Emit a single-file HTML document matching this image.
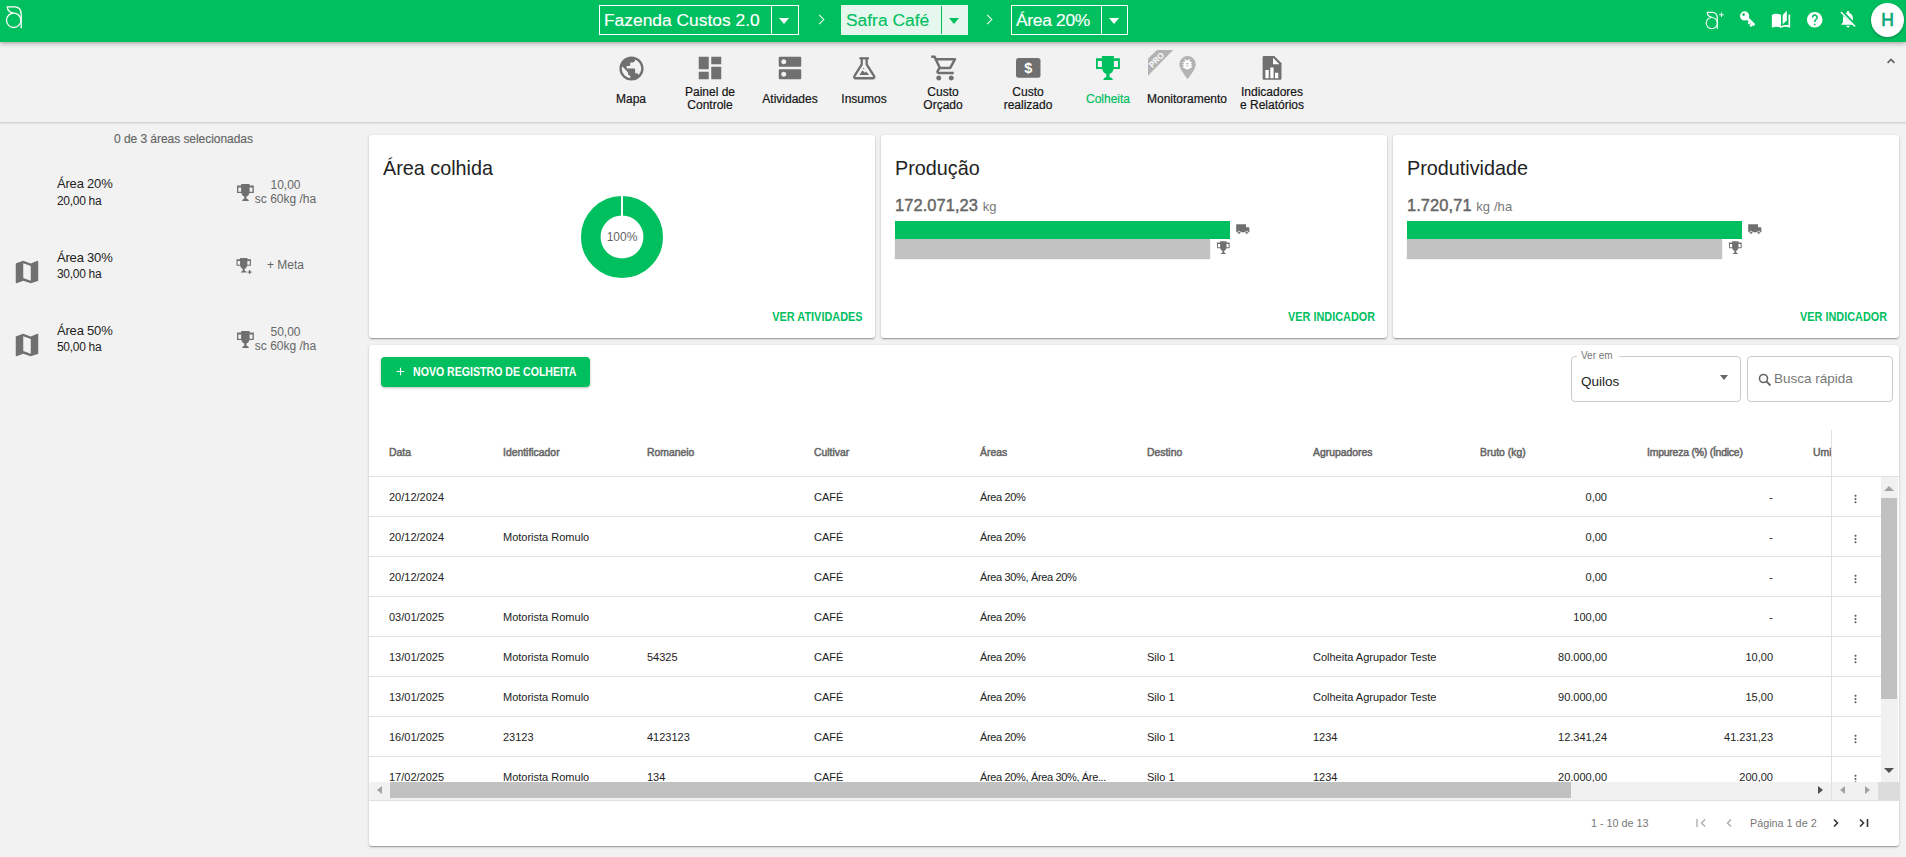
<!DOCTYPE html>
<html><head><meta charset="utf-8">
<style>
*{box-sizing:border-box;margin:0;padding:0}
html,body{width:1906px;height:857px;overflow:hidden}
body{background:#f2f2f2;font-family:"Liberation Sans",sans-serif;position:relative;color:#222}
.a{position:absolute}
.t{position:absolute;white-space:nowrap;line-height:1}
#hdr{left:0;top:0;width:1906px;height:42px;background:#00bf5f;box-shadow:0 1px 5px rgba(0,0,0,.38);z-index:5}
.bc{position:absolute;top:5px;height:30px;border:1px solid #fff;}
.bc .lbl{position:absolute;left:4px;top:5px;font-size:17.4px;color:#fff;-webkit-text-stroke:0.15px currentColor;white-space:nowrap;line-height:18px}
.bc .dv{position:absolute;top:0;width:1px;height:28px;background:#fff}
.bc .ar{position:absolute;top:12px;width:0;height:0;border-left:5.5px solid transparent;border-right:5.5px solid transparent;border-top:6px solid #fff}
.chev{position:absolute;top:16px;width:7px;height:7px;border-right:1.6px solid #fff;border-top:1.6px solid #fff;transform:rotate(45deg)}
#nav{left:0;top:42px;width:1906px;height:81px;border-bottom:1px solid #d4d4d4;box-shadow:0 1px 1px rgba(0,0,0,.06)}
.ni{position:absolute;top:0;text-align:center;font-size:12px;color:#151515;-webkit-text-stroke:0.2px #151515;line-height:12.5px;white-space:nowrap}
.ico{position:absolute}
.card{position:absolute;background:#fff;border-radius:3px;box-shadow:0 1px 3px rgba(0,0,0,.2),0 1px 1px rgba(0,0,0,.14),0 2px 1px -1px rgba(0,0,0,.12)}
</style></head><body>

<div id="hdr" class="a">
  <!-- logo -->
  <svg class="a" style="left:0;top:0" width="30" height="40" viewBox="0 0 30 40">
    <g fill="none" stroke="#fff" stroke-width="1.3">
      <circle cx="13.7" cy="20.3" r="7.2"/>
      <path d="M21.2 28.2V14.5C21.2 9.5 18.5 6.9 14.5 6.9H7.3C7.3 10.5 10.5 12.8 13.7 13.1"/>
    </g>
  </svg>

  <div class="bc" style="left:599px;width:200px">
    <div class="lbl">Fazenda Custos 2.0</div>
    <div class="dv" style="left:171px"></div>
    <div class="ar" style="left:179px"></div>
  </div>
  <div class="chev" style="left:816px"></div>
  <div class="bc" style="left:841px;width:127px;background:#e6f8ee;border-color:#e6f8ee">
    <div class="lbl" style="color:#00bf5f">Safra Café</div>
    <div class="dv" style="left:99px;background:#00bf5f"></div>
    <div class="ar" style="left:107px;border-top-color:#00bf5f"></div>
  </div>
  <div class="chev" style="left:984px"></div>
  <div class="bc" style="left:1011px;width:117px">
    <div class="lbl" style="letter-spacing:-0.3px">Área 20%</div>
    <div class="dv" style="left:89px"></div>
    <div class="ar" style="left:97px"></div>
  </div>

  <!-- right icons -->
  <svg class="a" style="left:1704px;top:10px" width="22" height="22" viewBox="0 0 22 22">
    <g fill="none" stroke="#fff" stroke-width="1.1">
      <circle cx="7.8" cy="13.1" r="5.6"/>
      <path d="M13.3 18.8V8.2C13.3 4.5 11.5 2.4 8.5 2.4H3.2C3.4 5 5.5 7 8 7.4"/>
      <path d="M17.5 2.5v4.5M15.2 4.75h4.6"/>
    </g>
  </svg>
  <svg class="a" style="left:1739px;top:10px" width="18" height="18" viewBox="0 0 18 18">
    <path fill="#fff" fill-rule="evenodd" d="M5.6 1.3a4.6 4.6 0 1 1 0 9.2a4.6 4.6 0 1 1 0-9.2zM4.6 3.3a1.3 1.3 0 1 0 0 2.6a1.3 1.3 0 1 0 0-2.6z"/>
    <g transform="translate(6.8 6.8) rotate(45)"><path fill="#fff" d="M0 -1.4h12v2.8h-1.2v2.2h-2.2v-2.2h-1v1.8h-2v-1.8H0z"/></g>
  </svg>
  <svg class="a" style="left:1771px;top:10px" width="20" height="20" viewBox="0 0 24 24">
    <path fill="#fff" d="M19 1l-5 5v11l5-4.5V1zM1 6v14.65c0 .25.25.5.5.5.1 0 .15-.05.25-.05C3.1 20.45 5.05 20 6.5 20c1.95 0 4.05.4 5.5 1.5V6c-1.45-1.1-3.55-1.5-5.5-1.5S2.45 4.9 1 6zm22 13.5V6c-.6-.45-1.25-.75-2-1v13.5c-1.1-.35-2.3-.5-3.5-.5-1.7 0-4.150.65-5.5 1.5v2c1.35-.85 3.8-1.5 5.5-1.5 1.65 0 3.35.3 4.75 1.05.1.05.15.05.25.05.25 0 .5-.25.5-.5v-1.1z"/>
  </svg>
  <svg class="a" style="left:1807px;top:12px" width="15.5" height="15.5" viewBox="2 2 20 20">
    <path fill="#fff" d="M12 2C6.48 2 2 6.48 2 12s4.48 10 10 10 10-4.48 10-10S17.52 2 12 2zm1 17h-2v-2h2v2zm2.07-7.75l-.9.92C13.45 12.9 13 13.5 13 15h-2v-.5c0-1.1.45-2.1 1.17-2.83l1.24-1.26c.37-.36.59-.86.59-1.410 0-1.1-.9-2-2-2s-2 .9-2 2H8c0-2.21 1.79-4 4-4s4 1.79 4 4c0 .88-.36 1.68-.93 2.25z"/>
  </svg>
  <svg class="a" style="left:1838px;top:9px" width="20" height="20" viewBox="0 0 24 24">
    <path fill="#fff" d="M18 11c0-3.08-1.64-5.64-4.5-6.32V4c0-.83-.67-1.5-1.5-1.5s-1.5.67-1.5 1.5v.68c-.47.11-.91.28-1.32.49L18 13.99V11zM12 22c1.1 0 2-.9 2-2h-4c0 1.1.9 2 2 2zM6.2 8.5C6.07 9.3 6 10.14 6 11v5l-2 2v1h14.9L6.2 8.5z"/>
    <path stroke="#fff" stroke-width="1.8" d="M3.5 3.5l17 17.5"/>
  </svg>
  <div class="a" style="left:1871px;top:3px;width:33px;height:34px;border-radius:50%;background:#fff;box-shadow:0 1px 3px rgba(0,0,0,.3)"></div>
  <div class="t" style="left:1879.5px;top:12px;width:16px;text-align:center;font-size:17.5px;color:#00a878;-webkit-text-stroke:0.6px #00a878">H</div>
</div>

<div id="nav" class="a">
  <!-- chevron up -->
  <svg class="a" style="left:1886px;top:15px" width="10" height="8" viewBox="0 0 10 8"><path d="M1.6 5.8L5 2.4l3.4 3.4" fill="none" stroke="#666" stroke-width="1.7"/></svg>

  <!-- Mapa -->
  <svg class="ico" style="left:616.5px;top:11.5px" width="29" height="29" viewBox="0 0 24 24"><path fill="#707070" d="M12 2C6.48 2 2 6.48 2 12s4.48 10 10 10 10-4.48 10-10S17.52 2 12 2zm-1 17.93c-3.95-.49-7-3.85-7-7.930 0-.62.08-1.21.21-1.79L9 15v1c0 1.1.9 2 2 2v1.93zm6.9-2.54c-.26-.81-1-1.39-1.9-1.39h-1v-3c0-.55-.45-1-1-1H8v-2h2c.55 0 1-.45 1-1V7h2c1.1 0 2-.9 2-2v-.41c2.93 1.19 5 4.06 5 7.41 0 2.08-.8 3.97-2.1 5.39z"/></svg>
  <div class="ni" style="left:591px;width:80px;top:51.3px">Mapa</div>

  <!-- Painel -->
  <svg class="ico" style="left:695px;top:11px" width="30" height="30" viewBox="0 0 24 24"><path fill="#707070" d="M3 13h8V3H3v10zm0 8h8v-6H3v6zm10 0h8V11h-8v10zm0-18v6h8V3h-8z"/></svg>
  <div class="ni" style="left:670px;width:80px;top:44px">Painel de<br>Controle</div>

  <!-- Atividades -->
  <svg class="ico" style="left:775px;top:11px" width="30" height="30" viewBox="0 0 24 24"><path fill="#707070" d="M20 13H4c-.55 0-1 .45-1 1v6c0 .55.45 1 1 1h16c.55 0 1-.45 1-1v-6c0-.55-.45-1-1-1zM7 19c-1.1 0-2-.9-2-2s.9-2 2-2 2 .9 2 2-.9 2-2 2zM20 3H4c-.55 0-1 .45-1 1v6c0 .55.45 1 1 1h16c.55 0 1-.45 1-1V4c0-.55-.45-1-1-1zM7 9c-1.1 0-2-.9-2-2s.9-2 2-2 2 .9 2 2-.9 2-2 2z"/></svg>
  <div class="ni" style="left:750px;width:80px;top:51.3px">Atividades</div>

  <!-- Insumos -->
  <svg class="ico" style="left:849px;top:11px" width="30" height="30" viewBox="0 0 30 30">
    <g fill="none" stroke="#707070" stroke-width="2.3" stroke-linejoin="round" stroke-linecap="round">
      <path d="M11.3 5.3h7.7"/>
      <path d="M12.75 5.3V11.3L5.4 23.2C4.8 24.300 5.4 25.25 6.6 25.25H23.9C25.1 25.25 25.7 24.3 25.1 23.2L17.65 11.3V5.3"/>
    </g>
    <path fill="#707070" d="M10.4 22L13.5 17.3l2.3 2.4 1.2-1.1 3.1 3.4z"/>
    <circle cx="14.7" cy="15.4" r=".6" fill="#707070"/>
  </svg>
  <div class="ni" style="left:824px;width:80px;top:51.3px">Insumos</div>

  <!-- Custo Orcado -->
  <svg class="ico" style="left:929.5px;top:11px" width="30" height="30" viewBox="0 0 24 24"><path fill="#707070" d="M15.55 13c.75 0 1.41-.41 1.75-1.03l3.58-6.49c.37-.66-.11-1.48-.87-1.48H5.21l-.94-2H1v2h2l3.6 7.59-1.35 2.44C4.52 15.37 5.48 17 7 17h12v-2H7l1.1-2h7.45zM6.16 6h12.150l-2.76 5H8.53L6.16 6zM7 18c-1.1 0-1.99.9-1.99 2S5.9 22 7 22s2-.9 2-2-.9-2-2-2zm10 0c-1.1 0-1.99.9-1.99 2s.89 2 1.990 2 2-.9 2-2-.9-2-2-2z"/></svg>
  <div class="ni" style="left:903px;width:80px;top:44px">Custo<br>Orçado</div>

  <!-- Custo realizado -->
  <svg class="ico" style="left:1016px;top:16px" width="25" height="20" viewBox="0 0 25 20">
    <rect x="0" y="0" width="24.5" height="19.8" rx="2.5" fill="#707070"/>
    <text x="12.3" y="14.6" text-anchor="middle" font-family="Liberation Sans" font-weight="bold" font-size="14.5" fill="#fff">$</text>
  </svg>
  <div class="ni" style="left:988px;width:80px;top:44px">Custo<br>realizado</div>

  <!-- Colheita -->
  <svg class="ico" style="left:1095px;top:13px" width="26" height="26" viewBox="0 0 26 26">
    <path fill="#00bf5f" fill-rule="evenodd" d="M6.9 1H18.9V3.2H24.9V13.9H18.6C18 16.6 16.6 18.3 14.5 18.9V22C16.3 22.3 17.6 23.6 18 25H8.2C8.6 23.6 9.8 22.3 11.3 22V18.9C9.2 18.3 7.8 16.6 7.2 13.9H1V3.2H6.9ZM2.8 6V12H6.9V6ZM18.9 6V12H23V6Z"/>
  </svg>
  <div class="ni" style="left:1068px;width:80px;top:51.3px;color:#00bf5f;-webkit-text-stroke:0.2px #00bf5f">Colheita</div>

  <!-- Monitoramento -->
  <svg class="ico" style="left:1147px;top:7px" width="28" height="28" viewBox="0 0 28 28">
    <path fill="#b3b3b3" d="M10 1H26.2L1 26.8V9.6z"/>
    <text transform="translate(9.4 10.9) rotate(-45)" x="0" y="2.9" text-anchor="middle" font-family="Liberation Sans" font-weight="bold" font-size="8.2" fill="#fff">PRO</text>
  </svg>
  <svg class="ico" style="left:1178px;top:13px" width="19" height="26" viewBox="0 0 19 26">
    <path fill="#b3b3b3" d="M9.6 24.1C7 20.5 1.4 13.8 1.4 9.2A8.2 8.2 0 0 1 17.8 9.2C17.8 13.8 12.2 20.5 9.6 24.1z"/>
    <g transform="translate(2.38 2.26) scale(.58)"><path fill="#fff" d="M20 8h-2.81c-.45-.78-1.07-1.45-1.820-1.96L17 4.41 15.59 3l-2.17 2.17C12.96 5.06 12.49 5 12 5c-.49 0-.96.06-1.41.17L8.41 3 7 4.410l1.62 1.63C7.88 6.55 7.26 7.22 6.81 8H4v2h2.09c-.05.33-.09.66-.09 1v1H4v2h2v1c0 .34.04.67.09 1H4v2h2.81c1.04 1.79 2.97 3 5.19 3s4.15-1.21 5.19-3H20v-2h-2.09c.05-.33.09-.66.09-1v-1h2v-2h-2v-1c0-.34-.04-.67-.09-1H20V8zm-6 8h-4v-2h4v2zm0-4h-4v-2h4v2z"/></g>
  </svg>
  <div class="ni" style="left:1147px;width:80px;top:51.3px;text-align:left;overflow:hidden">Monitoramento</div>

  <!-- Indicadores -->
  <svg class="ico" style="left:1261px;top:13px" width="22" height="26" viewBox="0 0 22 26">
    <path fill="#707070" d="M3 1.1h10.4l7.1 7.1v15c0 .9-.7 1.6-1.6 1.6H3.2c-.9 0-1.6-.7-1.6-1.6V2.7C1.6 1.8 2.1 1.1 3 1.1z"/>
    <path fill="#fff" d="M12 2.8v6.5h6.4zM4.4 15h3.3v8.2H4.4zM9.3 12.6h3.3v10.6H9.3zM14 17.7h3.3v5.5H14z"/>
  </svg>
  <div class="ni" style="left:1232px;width:80px;top:44px">Indicadores<br>e Relatórios</div>
</div>



<!-- LEFT PANEL -->
<div class="t" style="left:114px;top:133px;font-size:12px;color:#666;letter-spacing:-0.05px;-webkit-text-stroke:0.15px #666">0 de 3 áreas selecionadas</div>

<div class="t" style="left:57px;top:177px;font-size:13px;letter-spacing:-0.2px;color:#222">Área 20%</div>
<div class="t" style="left:57px;top:194.6px;font-size:12px;letter-spacing:-0.3px;color:#222">20,00 ha</div>
<svg class="a" style="left:237px;top:184px" width="20" height="20" viewBox="0 0 20 20"><path transform="translate(-0.70 -0.70) scale(0.703)" fill="#707070" fill-rule="evenodd" d="M6.9 1H18.9V3.2H24.9V13.9H18.6C18 16.6 16.6 18.3 14.5 18.9V22C16.3 22.3 17.6 23.6 18 25H8.2C8.6 23.6 9.8 22.3 11.3 22V18.9C9.2 18.3 7.8 16.6 7.2 13.9H1V3.2H6.9ZM2.8 6V12H6.9V6ZM18.9 6V12H23V6Z"/></svg>
<div class="t" style="left:245px;width:81px;text-align:center;top:177.5px;font-size:12px;color:#666;line-height:14px">10,00<br>sc 60kg /ha</div>

<svg class="a" style="left:12px;top:257px" width="30" height="30" viewBox="0 0 24 24"><path fill="#707070" d="M20.5 3l-.16.03L15 5.1 9 3 3.36 4.9c-.21.07-.36.25-.36.48V20.5c0 .28.22.5.5.5l.16-.03L9 18.9l6 2.1 5.64-1.9c.21-.07.36-.25.36-.48V3.5c0-.28-.22-.5-.5-.5zM15 19l-6-2.11V5l6 2.11V19z"/></svg>
<div class="t" style="left:57px;top:251px;font-size:13px;letter-spacing:-0.2px;color:#222">Área 30%</div>
<div class="t" style="left:57px;top:267.6px;font-size:12px;letter-spacing:-0.3px;color:#222">30,00 ha</div>
<svg class="a" style="left:236px;top:258px" width="20" height="20" viewBox="0 0 20 20"><path transform="translate(-0.10 -0.60) scale(0.605)" fill="#707070" fill-rule="evenodd" d="M6.9 1H18.9V3.2H24.9V13.9H18.6C18 16.6 16.6 18.3 14.5 18.9V22C16.3 22.3 17.6 23.6 18 25H8.2C8.6 23.6 9.8 22.3 11.3 22V18.9C9.2 18.3 7.8 16.6 7.2 13.9H1V3.2H6.9ZM2.8 6V12H6.9V6ZM18.9 6V12H23V6Z"/><path stroke="#707070" stroke-width="1.2" d="M11.6 14.1h4M13.6 12.1v4"/></svg>
<div class="t" style="left:267px;top:259px;font-size:12px;color:#666">+ Meta</div>

<svg class="a" style="left:12px;top:330px" width="30" height="30" viewBox="0 0 24 24"><path fill="#707070" d="M20.5 3l-.16.03L15 5.1 9 3 3.36 4.9c-.21.07-.36.25-.36.48V20.5c0 .28.22.5.5.5l.16-.03L9 18.9l6 2.1 5.64-1.9c.21-.07.36-.25.36-.48V3.5c0-.28-.22-.5-.5-.5zM15 19l-6-2.11V5l6 2.11V19z"/></svg>
<div class="t" style="left:57px;top:323.8px;font-size:13px;letter-spacing:-0.2px;color:#222">Área 50%</div>
<div class="t" style="left:57px;top:340.8px;font-size:12px;letter-spacing:-0.3px;color:#222">50,00 ha</div>
<svg class="a" style="left:237px;top:331px" width="20" height="20" viewBox="0 0 20 20"><path transform="translate(-0.70 -0.70) scale(0.703)" fill="#707070" fill-rule="evenodd" d="M6.9 1H18.9V3.2H24.9V13.9H18.6C18 16.6 16.6 18.3 14.5 18.9V22C16.3 22.3 17.6 23.6 18 25H8.2C8.6 23.6 9.8 22.3 11.3 22V18.9C9.2 18.3 7.8 16.6 7.2 13.9H1V3.2H6.9ZM2.8 6V12H6.9V6ZM18.9 6V12H23V6Z"/></svg>
<div class="t" style="left:245px;width:81px;text-align:center;top:325px;font-size:12px;color:#666;line-height:14px">50,00<br>sc 60kg /ha</div>

<!-- CARDS -->
<div class="card" style="left:369px;top:135px;width:506px;height:203px">
  <div class="t" style="left:14px;top:24px;font-size:19.8px;color:#222">Área colhida</div>
  <svg class="a" style="left:211px;top:60px" width="84" height="84" viewBox="0 0 84 84">
    <circle cx="42" cy="42" r="31.2" fill="none" stroke="#00bf5f" stroke-width="19.6"/>
    <rect x="41" y="0" width="2" height="22" fill="#fff"/>
  </svg>
  <div class="t" style="left:223px;top:96px;width:60px;text-align:center;font-size:12px;color:#666">100%</div>
  <div class="t" style="right:12px;top:176px;font-size:12.4px;font-weight:bold;color:#00bf5f;transform:scaleX(0.88);transform-origin:100% 0">VER ATIVIDADES</div>
</div>

<div class="card" style="left:881px;top:135px;width:506px;height:203px">
  <div class="t" style="left:14px;top:24px;font-size:19.8px;color:#222">Produção</div>
  <div class="t" style="left:14px;top:62.3px;font-size:16.4px;font-weight:normal;color:#666;-webkit-text-stroke:0.45px #666;letter-spacing:0.1px">172.071,23 <span style="font-size:13px;font-weight:normal;color:#777;-webkit-text-stroke:0">kg</span></div>
  <div class="a" style="left:14px;top:86px;width:335px;height:18px;background:#00bf5f"></div>
  <div class="a" style="left:14px;top:104px;width:315px;height:19px;background:#c2c2c2;box-shadow:0 1px 1px rgba(0,0,0,.25)"></div>
  <svg class="a" style="left:355px;top:88px" width="15" height="11" viewBox="0 0 15 11"><path fill="#707070" d="M.2 1.2h9.8v8.1H.2zM10 4.2h2.2c.7 0 1.2.5 1.2 1.200V9.3H10z"/><circle cx="3.1" cy="9.7" r="1.5" fill="#707070" stroke="#fff" stroke-width=".7"/><circle cx="10.8" cy="9.7" r="1.5" fill="#707070" stroke="#fff" stroke-width=".7"/></svg>
  <svg class="a" style="left:335px;top:105px" width="20" height="20" viewBox="0 0 20 20"><path transform="translate(0.47 0.77) scale(0.53)" fill="#707070" fill-rule="evenodd" d="M6.9 1H18.9V3.2H24.9V13.9H18.6C18 16.6 16.6 18.3 14.5 18.9V22C16.3 22.3 17.6 23.6 18 25H8.2C8.6 23.6 9.8 22.3 11.3 22V18.9C9.2 18.3 7.8 16.6 7.2 13.9H1V3.2H6.9ZM2.8 6V12H6.9V6ZM18.9 6V12H23V6Z"/></svg>
  <div class="t" style="right:12px;top:176px;font-size:12.4px;font-weight:bold;color:#00bf5f;transform:scaleX(0.878);transform-origin:100% 0">VER INDICADOR</div>
</div>

<div class="card" style="left:1393px;top:135px;width:506px;height:203px">
  <div class="t" style="left:14px;top:24px;font-size:19.8px;color:#222">Produtividade</div>
  <div class="t" style="left:14px;top:62.3px;font-size:16.4px;font-weight:normal;color:#666;-webkit-text-stroke:0.45px #666;letter-spacing:0.1px">1.720,71 <span style="font-size:13px;font-weight:normal;color:#777;-webkit-text-stroke:0">kg /ha</span></div>
  <div class="a" style="left:14px;top:86px;width:335px;height:18px;background:#00bf5f"></div>
  <div class="a" style="left:14px;top:104px;width:315px;height:19px;background:#c2c2c2;box-shadow:0 1px 1px rgba(0,0,0,.25)"></div>
  <svg class="a" style="left:355px;top:88px" width="15" height="11" viewBox="0 0 15 11"><path fill="#707070" d="M.2 1.2h9.8v8.1H.2zM10 4.2h2.2c.7 0 1.2.5 1.2 1.200V9.3H10z"/><circle cx="3.1" cy="9.7" r="1.5" fill="#707070" stroke="#fff" stroke-width=".7"/><circle cx="10.8" cy="9.7" r="1.5" fill="#707070" stroke="#fff" stroke-width=".7"/></svg>
  <svg class="a" style="left:336px;top:105px" width="20" height="20" viewBox="0 0 20 20"><path transform="translate(-0.53 0.77) scale(0.53)" fill="#707070" fill-rule="evenodd" d="M6.9 1H18.9V3.2H24.9V13.9H18.6C18 16.6 16.6 18.3 14.5 18.9V22C16.3 22.3 17.6 23.6 18 25H8.2C8.6 23.6 9.8 22.3 11.3 22V18.9C9.2 18.3 7.8 16.6 7.2 13.9H1V3.2H6.9ZM2.8 6V12H6.9V6ZM18.9 6V12H23V6Z"/></svg>
  <div class="t" style="right:12px;top:176px;font-size:12.4px;font-weight:bold;color:#00bf5f;transform:scaleX(0.878);transform-origin:100% 0">VER INDICADOR</div>
</div>

<!-- TABLE -->
<div class="card" style="left:369px;top:345px;width:1530px;height:501px;overflow:hidden">
<div class="a" style="left:12px;top:12px;width:209px;height:30px;background:#00bf5f;border-radius:4px;box-shadow:0 1px 3px rgba(0,0,0,.25)"></div>
<svg class="a" style="left:27px;top:22px" width="10" height="10" viewBox="0 0 10 10"><path d="M4.5 0.7v7.6M0.7 4.5h7.6" stroke="#fff" stroke-width="1.1"/></svg>
<div class="t" style="left:44px;top:21px;font-size:12.3px;font-weight:bold;color:#fff;transform:scaleX(0.861);transform-origin:0 0">NOVO REGISTRO DE COLHEITA</div>
<div class="a" style="left:1202px;top:11px;width:170px;height:46px;border:1px solid #ccc;border-radius:4px"></div>
<div class="a" style="left:1208px;top:5px;width:42px;height:10px;background:#fff"></div>
<div class="t" style="left:1212px;top:5.5px;font-size:10px;color:#777">Ver em</div>
<div class="t" style="left:1212px;top:30px;font-size:13.5px;color:#222">Quilos</div>
<div class="a" style="left:1350.7px;top:30px;width:0;height:0;border-left:4.5px solid transparent;border-right:4.5px solid transparent;border-top:5px solid #666"></div>
<div class="a" style="left:1378px;top:11px;width:146px;height:46px;border:1px solid #ccc;border-radius:4px"></div>
<svg class="a" style="left:1389px;top:28px" width="14" height="14" viewBox="0 0 14 14"><circle cx="5.5" cy="5.5" r="4" fill="none" stroke="#666" stroke-width="1.6"/><path d="M8.5 8.5l4 4" stroke="#666" stroke-width="1.8"/></svg>
<div class="t" style="left:1405px;top:27px;font-size:13.5px;color:#777">Busca rápida</div>
<div class="a" style="left:0;top:85px;width:1462px;height:370px;overflow:hidden">
<div class="t" style="left:20px;top:18px;font-size:10.4px;font-weight:normal;color:#666;-webkit-text-stroke:0.5px #666">Data</div>
<div class="t" style="left:134px;top:18px;font-size:10.4px;font-weight:normal;color:#666;-webkit-text-stroke:0.5px #666">Identificador</div>
<div class="t" style="left:278px;top:18px;font-size:10.4px;font-weight:normal;color:#666;-webkit-text-stroke:0.5px #666">Romaneio</div>
<div class="t" style="left:445px;top:18px;font-size:10.4px;font-weight:normal;color:#666;-webkit-text-stroke:0.5px #666">Cultivar</div>
<div class="t" style="left:611px;top:18px;font-size:10.4px;font-weight:normal;color:#666;-webkit-text-stroke:0.5px #666">Áreas</div>
<div class="t" style="left:778px;top:18px;font-size:10.4px;font-weight:normal;color:#666;-webkit-text-stroke:0.5px #666">Destino</div>
<div class="t" style="left:944px;top:18px;font-size:10.4px;font-weight:normal;color:#666;-webkit-text-stroke:0.5px #666">Agrupadores</div>
<div class="t" style="left:1111px;top:18px;font-size:10.4px;font-weight:normal;color:#666;-webkit-text-stroke:0.5px #666">Bruto (kg)</div>
<div class="t" style="left:1278px;top:18px;font-size:10.4px;font-weight:normal;color:#666;-webkit-text-stroke:0.5px #666;letter-spacing:-0.2px">Impureza (%) (Índice)</div>
<div class="t" style="left:1444px;top:18px;font-size:10.4px;font-weight:normal;color:#666;-webkit-text-stroke:0.5px #666">Umidade (%) (Índice)</div>
<div class="a" style="left:0;top:46px;width:1530px;height:1px;background:#e0e0e0"></div>
<div class="t" style="left:20px;top:61.7px;font-size:11px;color:#222">20/12/2024</div>
<div class="t" style="left:445px;top:61.7px;font-size:11px;color:#222">CAFÉ</div>
<div class="t" style="left:611px;top:61.7px;font-size:11px;color:#222;letter-spacing:-0.35px">Área 20%</div>
<div class="t" style="right:224px;top:61.7px;font-size:11px;color:#222;text-align:right">0,00</div>
<div class="t" style="right:58px;top:61.7px;font-size:11px;color:#222;text-align:right">-</div>
<div class="a" style="left:0;top:86px;width:1530px;height:1px;background:#e0e0e0"></div>
<div class="t" style="left:20px;top:101.7px;font-size:11px;color:#222">20/12/2024</div>
<div class="t" style="left:134px;top:101.7px;font-size:11px;color:#222">Motorista Romulo</div>
<div class="t" style="left:445px;top:101.7px;font-size:11px;color:#222">CAFÉ</div>
<div class="t" style="left:611px;top:101.7px;font-size:11px;color:#222;letter-spacing:-0.35px">Área 20%</div>
<div class="t" style="right:224px;top:101.7px;font-size:11px;color:#222;text-align:right">0,00</div>
<div class="t" style="right:58px;top:101.7px;font-size:11px;color:#222;text-align:right">-</div>
<div class="a" style="left:0;top:126px;width:1530px;height:1px;background:#e0e0e0"></div>
<div class="t" style="left:20px;top:141.7px;font-size:11px;color:#222">20/12/2024</div>
<div class="t" style="left:445px;top:141.7px;font-size:11px;color:#222">CAFÉ</div>
<div class="t" style="left:611px;top:141.7px;font-size:11px;color:#222;letter-spacing:-0.35px">Área 30%, Área 20%</div>
<div class="t" style="right:224px;top:141.7px;font-size:11px;color:#222;text-align:right">0,00</div>
<div class="t" style="right:58px;top:141.7px;font-size:11px;color:#222;text-align:right">-</div>
<div class="a" style="left:0;top:166px;width:1530px;height:1px;background:#e0e0e0"></div>
<div class="t" style="left:20px;top:181.7px;font-size:11px;color:#222">03/01/2025</div>
<div class="t" style="left:134px;top:181.7px;font-size:11px;color:#222">Motorista Romulo</div>
<div class="t" style="left:445px;top:181.7px;font-size:11px;color:#222">CAFÉ</div>
<div class="t" style="left:611px;top:181.7px;font-size:11px;color:#222;letter-spacing:-0.35px">Área 20%</div>
<div class="t" style="right:224px;top:181.7px;font-size:11px;color:#222;text-align:right">100,00</div>
<div class="t" style="right:58px;top:181.7px;font-size:11px;color:#222;text-align:right">-</div>
<div class="a" style="left:0;top:206px;width:1530px;height:1px;background:#e0e0e0"></div>
<div class="t" style="left:20px;top:221.7px;font-size:11px;color:#222">13/01/2025</div>
<div class="t" style="left:134px;top:221.7px;font-size:11px;color:#222">Motorista Romulo</div>
<div class="t" style="left:278px;top:221.7px;font-size:11px;color:#222">54325</div>
<div class="t" style="left:445px;top:221.7px;font-size:11px;color:#222">CAFÉ</div>
<div class="t" style="left:611px;top:221.7px;font-size:11px;color:#222;letter-spacing:-0.35px">Área 20%</div>
<div class="t" style="left:778px;top:221.7px;font-size:11px;color:#222">Silo 1</div>
<div class="t" style="left:944px;top:221.7px;font-size:11px;color:#222">Colheita Agrupador Teste</div>
<div class="t" style="right:224px;top:221.7px;font-size:11px;color:#222;text-align:right">80.000,00</div>
<div class="t" style="right:58px;top:221.7px;font-size:11px;color:#222;text-align:right">10,00</div>
<div class="a" style="left:0;top:246px;width:1530px;height:1px;background:#e0e0e0"></div>
<div class="t" style="left:20px;top:261.7px;font-size:11px;color:#222">13/01/2025</div>
<div class="t" style="left:134px;top:261.7px;font-size:11px;color:#222">Motorista Romulo</div>
<div class="t" style="left:445px;top:261.7px;font-size:11px;color:#222">CAFÉ</div>
<div class="t" style="left:611px;top:261.7px;font-size:11px;color:#222;letter-spacing:-0.35px">Área 20%</div>
<div class="t" style="left:778px;top:261.7px;font-size:11px;color:#222">Silo 1</div>
<div class="t" style="left:944px;top:261.7px;font-size:11px;color:#222">Colheita Agrupador Teste</div>
<div class="t" style="right:224px;top:261.7px;font-size:11px;color:#222;text-align:right">90.000,00</div>
<div class="t" style="right:58px;top:261.7px;font-size:11px;color:#222;text-align:right">15,00</div>
<div class="a" style="left:0;top:286px;width:1530px;height:1px;background:#e0e0e0"></div>
<div class="t" style="left:20px;top:301.7px;font-size:11px;color:#222">16/01/2025</div>
<div class="t" style="left:134px;top:301.7px;font-size:11px;color:#222">23123</div>
<div class="t" style="left:278px;top:301.7px;font-size:11px;color:#222">4123123</div>
<div class="t" style="left:445px;top:301.7px;font-size:11px;color:#222">CAFÉ</div>
<div class="t" style="left:611px;top:301.7px;font-size:11px;color:#222;letter-spacing:-0.35px">Área 20%</div>
<div class="t" style="left:778px;top:301.7px;font-size:11px;color:#222">Silo 1</div>
<div class="t" style="left:944px;top:301.7px;font-size:11px;color:#222">1234</div>
<div class="t" style="right:224px;top:301.7px;font-size:11px;color:#222;text-align:right">12.341,24</div>
<div class="t" style="right:58px;top:301.7px;font-size:11px;color:#222;text-align:right">41.231,23</div>
<div class="a" style="left:0;top:326px;width:1530px;height:1px;background:#e0e0e0"></div>
<div class="t" style="left:20px;top:341.7px;font-size:11px;color:#222">17/02/2025</div>
<div class="t" style="left:134px;top:341.7px;font-size:11px;color:#222">Motorista Romulo</div>
<div class="t" style="left:278px;top:341.7px;font-size:11px;color:#222">134</div>
<div class="t" style="left:445px;top:341.7px;font-size:11px;color:#222">CAFÉ</div>
<div class="t" style="left:611px;top:341.7px;font-size:11px;color:#222;letter-spacing:-0.35px">Área 20%, Área 30%, Áre...</div>
<div class="t" style="left:778px;top:341.7px;font-size:11px;color:#222">Silo 1</div>
<div class="t" style="left:944px;top:341.7px;font-size:11px;color:#222">1234</div>
<div class="t" style="right:224px;top:341.7px;font-size:11px;color:#222;text-align:right">20.000,00</div>
<div class="t" style="right:58px;top:341.7px;font-size:11px;color:#222;text-align:right">200,00</div>
</div>
<div class="a" style="left:1462px;top:85px;width:1px;height:370px;background:#e0e0e0"></div>
<div class="a" style="left:1463px;top:131px;width:67px;height:1px;background:#e0e0e0"></div>
<div class="a" style="left:1463px;top:171px;width:49px;height:1px;background:#e0e0e0"></div>
<svg class="a" style="left:1484px;top:149.0px" width="5" height="10" viewBox="0 0 5 10"><circle cx="2.5" cy="1.7" r="1" fill="#555"/><circle cx="2.5" cy="5" r="1" fill="#555"/><circle cx="2.5" cy="8.3" r="1" fill="#555"/></svg>
<div class="a" style="left:1463px;top:211px;width:49px;height:1px;background:#e0e0e0"></div>
<svg class="a" style="left:1484px;top:189.0px" width="5" height="10" viewBox="0 0 5 10"><circle cx="2.5" cy="1.7" r="1" fill="#555"/><circle cx="2.5" cy="5" r="1" fill="#555"/><circle cx="2.5" cy="8.3" r="1" fill="#555"/></svg>
<div class="a" style="left:1463px;top:251px;width:49px;height:1px;background:#e0e0e0"></div>
<svg class="a" style="left:1484px;top:229.0px" width="5" height="10" viewBox="0 0 5 10"><circle cx="2.5" cy="1.7" r="1" fill="#555"/><circle cx="2.5" cy="5" r="1" fill="#555"/><circle cx="2.5" cy="8.3" r="1" fill="#555"/></svg>
<div class="a" style="left:1463px;top:291px;width:49px;height:1px;background:#e0e0e0"></div>
<svg class="a" style="left:1484px;top:269.0px" width="5" height="10" viewBox="0 0 5 10"><circle cx="2.5" cy="1.7" r="1" fill="#555"/><circle cx="2.5" cy="5" r="1" fill="#555"/><circle cx="2.5" cy="8.3" r="1" fill="#555"/></svg>
<div class="a" style="left:1463px;top:331px;width:49px;height:1px;background:#e0e0e0"></div>
<svg class="a" style="left:1484px;top:309.0px" width="5" height="10" viewBox="0 0 5 10"><circle cx="2.5" cy="1.7" r="1" fill="#555"/><circle cx="2.5" cy="5" r="1" fill="#555"/><circle cx="2.5" cy="8.3" r="1" fill="#555"/></svg>
<div class="a" style="left:1463px;top:371px;width:49px;height:1px;background:#e0e0e0"></div>
<svg class="a" style="left:1484px;top:349.0px" width="5" height="10" viewBox="0 0 5 10"><circle cx="2.5" cy="1.7" r="1" fill="#555"/><circle cx="2.5" cy="5" r="1" fill="#555"/><circle cx="2.5" cy="8.3" r="1" fill="#555"/></svg>
<div class="a" style="left:1463px;top:411px;width:49px;height:1px;background:#e0e0e0"></div>
<svg class="a" style="left:1484px;top:389.0px" width="5" height="10" viewBox="0 0 5 10"><circle cx="2.5" cy="1.7" r="1" fill="#555"/><circle cx="2.5" cy="5" r="1" fill="#555"/><circle cx="2.5" cy="8.3" r="1" fill="#555"/></svg>
<svg class="a" style="left:1484px;top:429.0px" width="5" height="10" viewBox="0 0 5 10"><circle cx="2.5" cy="1.7" r="1" fill="#555"/><circle cx="2.5" cy="5" r="1" fill="#555"/><circle cx="2.5" cy="8.3" r="1" fill="#555"/></svg>
<div class="a" style="left:1512px;top:132px;width:17px;height:305px;background:#f1f1f1"></div>
<div class="a" style="left:1512px;top:153px;width:16px;height:201px;background:#c1c1c1"></div>
<div class="a" style="left:1515px;top:141px;width:0;height:0;border-left:5px solid transparent;border-right:5px solid transparent;border-bottom:5px solid #a3a3a3"></div>
<div class="a" style="left:1515px;top:423px;width:0;height:0;border-left:5px solid transparent;border-right:5px solid transparent;border-top:5px solid #505050"></div>
<div class="a" style="left:0;top:437px;width:1530px;height:18px;background:#f1f1f1"></div>
<div class="a" style="left:1509px;top:437px;width:21px;height:18px;background:#dcdcdc"></div>
<div class="a" style="left:0;top:455px;width:1530px;height:1px;background:#e0e0e0"></div>
<div class="a" style="left:1462px;top:437px;width:1px;height:18px;background:#e0e0e0"></div>
<div class="a" style="left:21px;top:437px;width:1181px;height:16px;background:#c1c1c1"></div>
<div class="a" style="left:8px;top:441px;width:0;height:0;border-top:4.5px solid transparent;border-bottom:4.5px solid transparent;border-right:5px solid #a3a3a3"></div>
<div class="a" style="left:1449px;top:441px;width:0;height:0;border-top:4.5px solid transparent;border-bottom:4.5px solid transparent;border-left:5px solid #505050"></div>
<div class="a" style="left:1471px;top:441px;width:0;height:0;border-top:4.5px solid transparent;border-bottom:4.5px solid transparent;border-right:5px solid #a3a3a3"></div>
<div class="a" style="left:1496px;top:441px;width:0;height:0;border-top:4.5px solid transparent;border-bottom:4.5px solid transparent;border-left:5px solid #a3a3a3"></div>
<div class="t" style="left:1222px;top:472.9px;font-size:10.8px;color:#777">1 - 10 de 13</div>
<div class="t" style="left:1381px;top:472.9px;font-size:10.8px;color:#777">Página 1 de 2</div>
<svg class="a" style="left:1326px;top:472px" width="12" height="12" viewBox="0 0 12 12"><path d="M2 2v8M10 2.5L6.5 6l3.5 3.5" fill="none" stroke="#aaa" stroke-width="1.3"/></svg>
<svg class="a" style="left:1354px;top:472px" width="12" height="12" viewBox="0 0 12 12"><path d="M8 2.5L4.5 6 8 9.5" fill="none" stroke="#aaa" stroke-width="1.3"/></svg>
<svg class="a" style="left:1461px;top:472px" width="12" height="12" viewBox="0 0 12 12"><path d="M4 2.5L7.5 6 4 9.5" fill="none" stroke="#333" stroke-width="1.6"/></svg>
<svg class="a" style="left:1488px;top:472px" width="14" height="12" viewBox="0 0 14 12"><path d="M3 2.5L6.5 6 3 9.5M10.5 2v8" fill="none" stroke="#333" stroke-width="1.6"/></svg>
</div>
</body></html>
